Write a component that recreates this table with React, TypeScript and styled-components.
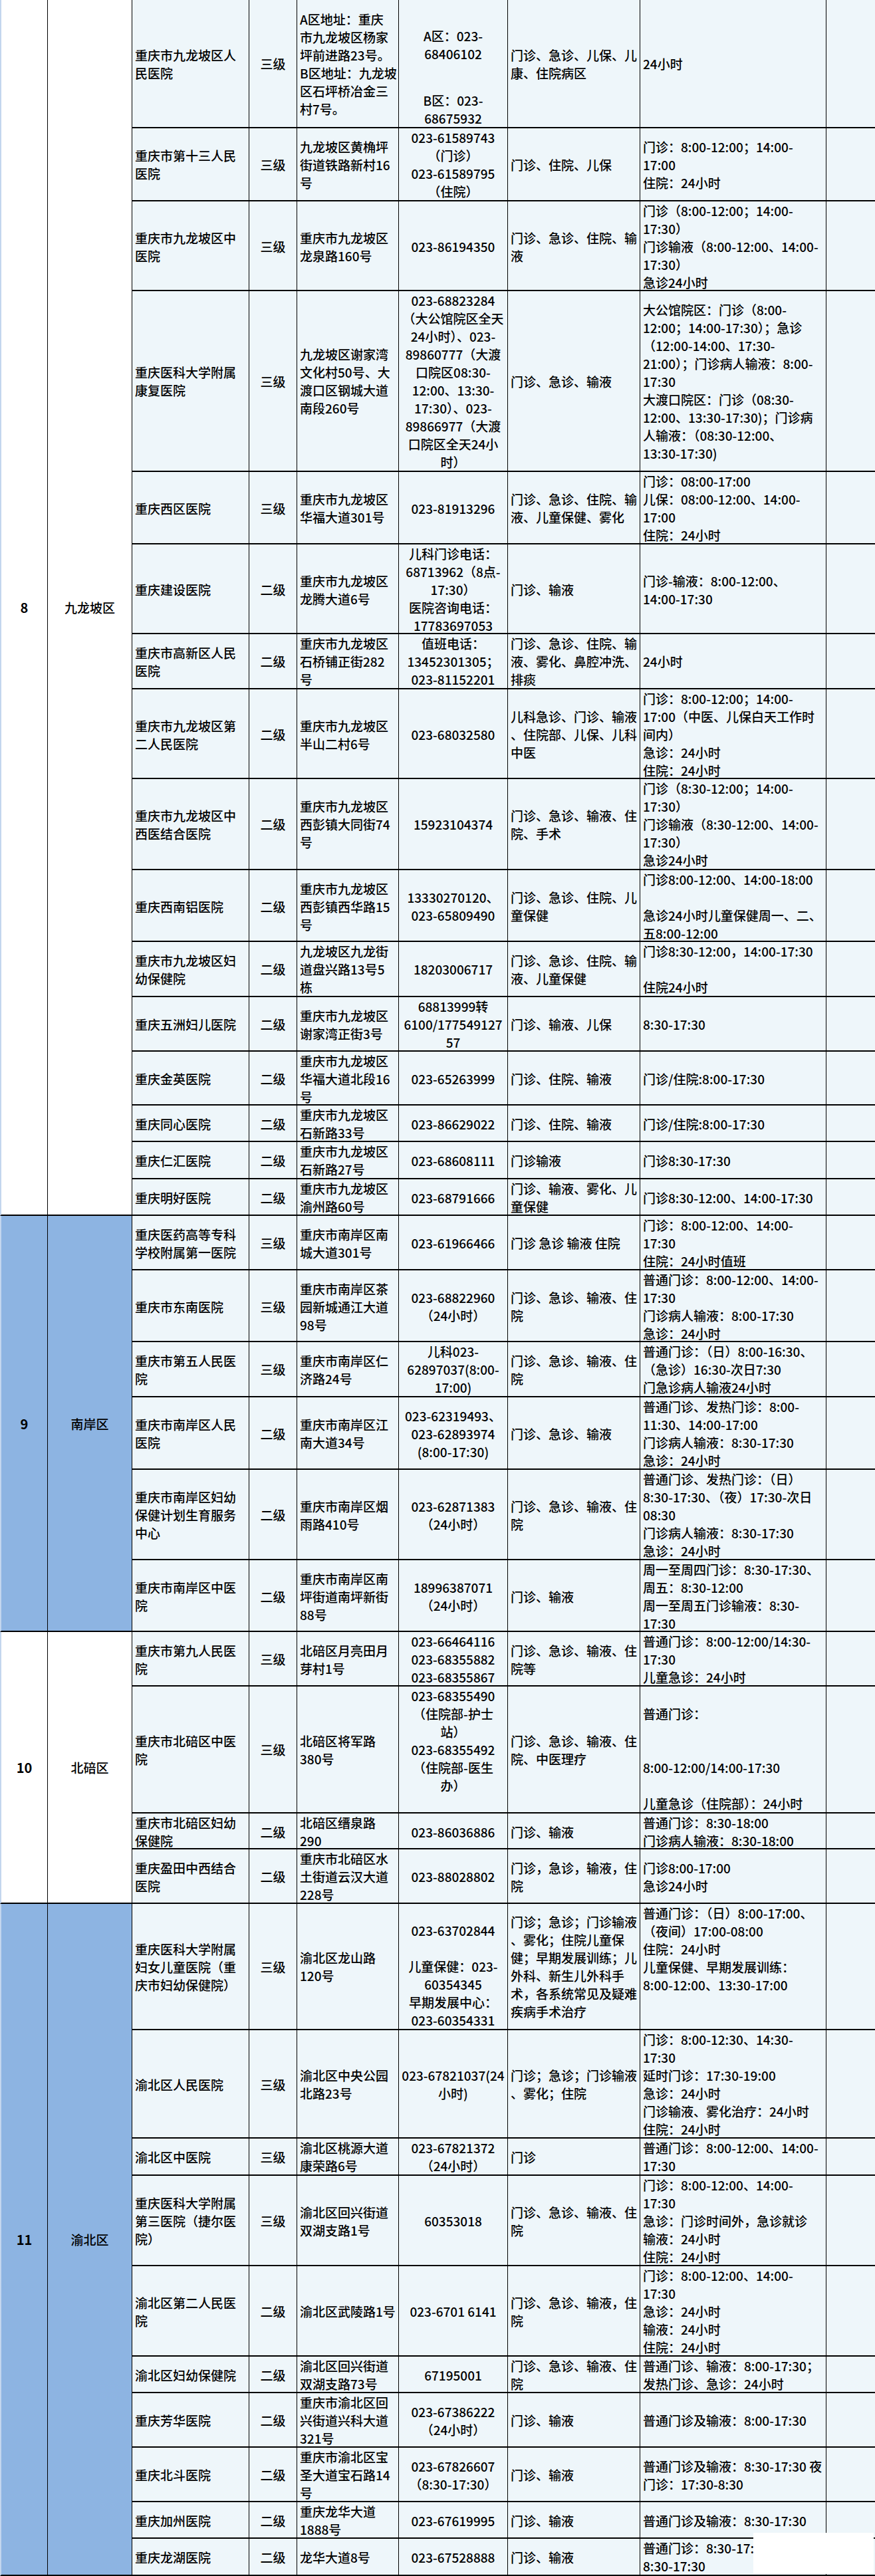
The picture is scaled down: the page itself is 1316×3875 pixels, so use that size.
import React from "react";
import styled, { createGlobalStyle } from "styled-components";

const GlobalStyle = createGlobalStyle`
  body {
    margin: 0;
    background: #ffffff;
    font-family: "Noto Sans CJK SC", "Noto Sans", sans-serif;
    color: #000000;
  }
`;

const Sheet = styled.div`
  position: relative;
  width: 1316px;
  font-size: 19px;
  font-weight: 500;
`;

const District = styled.div`
  display: flex;
  width: 100%;
`;

const GroupCell = styled.div<{ $fill: boolean; $w: number; $bold?: boolean }>`
  flex: none;
  width: ${({ $w }) => $w}px;
  box-sizing: border-box;
  display: flex;
  align-items: center;
  justify-content: center;
  background: ${({ $fill }) => ($fill ? "#8db4e2" : "#ffffff")};
  border-right: 1px solid #000;
  border-bottom: 2px solid #000;
  font-weight: ${({ $bold }) => ($bold ? 700 : 500)};
  font-size: ${({ $bold }) => ($bold ? "20px" : "19px")};
`;

const NumCell = styled(GroupCell)`
  border-left: 2px solid #c3d6ee;
`;

const Rows = styled.div`
  flex: 1;
  display: flex;
  flex-direction: column;
`;

const Row = styled.div<{ $h: number }>`
  display: grid;
  grid-template-columns: 176px 72px 153px 164px 199px 280px 1fr;
  height: ${({ $h }) => $h}px;
  box-sizing: border-box;
  border-bottom: 2px solid #000;
  background: #eef6fa;
`;

const Cell = styled.div<{ $center?: boolean; $v?: "top" | "bottom" }>`
  display: flex;
  flex-direction: column;
  justify-content: ${({ $v }) => ($v === "top" ? "flex-start" : $v === "bottom" ? "flex-end" : "center")};
  align-items: ${({ $center }) => ($center ? "center" : "flex-start")};
  padding: 0 4px;
  border-right: 1px solid #000;
  overflow: visible;
  min-width: 0;
`;

const EmptyCell = styled.div``;

const Line = styled.div`
  height: 27px;
  line-height: 27px;
  white-space: pre;
`;

const Gap = styled.div`
  height: 43px;
`;

const Patch = styled.div`
  position: absolute;
  left: 1133px;
  top: 3810px;
  width: 181px;
  height: 62px;
  background: #ffffff;
`;

type Hospital = {
  h: number;
  name: string;
  level: string;
  addr: string;
  phone: string;
  svc: string;
  hours: string;
  phoneV?: "top" | "bottom";
  hoursV?: "top" | "bottom";
};

type Area = { no: string; name: string; fill: boolean; rows: Hospital[] };

const areas: Area[] = [
  {
    no: "8",
    name: "九龙坡区",
    fill: false,
    rows: [
      {
        h: 193,
        name: "重庆市九龙坡区人\n民医院",
        level: "三级",
        addr: "A区地址：重庆\n市九龙坡区杨家\n坪前进路23号。\nB区地址：九龙坡\n区石坪桥冶金三\n村7号。",
        phone: "A区：023-\n68406102\n_\nB区：023-\n68675932",
        phoneV: "bottom",
        svc: "门诊、急诊、儿保、儿\n康、住院病区",
        hours: "24小时",
      },
      {
        h: 110,
        name: "重庆市第十三人民\n医院",
        level: "三级",
        addr: "九龙坡区黄桷坪\n街道铁路新村16\n号",
        phone: "023-61589743\n（门诊）\n023-61589795\n（住院）",
        svc: "门诊、住院、儿保",
        hours: "门诊：8:00-12:00；14:00-\n17:00\n住院：24小时",
      },
      {
        h: 135,
        name: "重庆市九龙坡区中\n医院",
        level: "三级",
        addr: "重庆市九龙坡区\n龙泉路160号",
        phone: "023-86194350",
        svc: "门诊、急诊、住院、输\n液",
        hours: "门诊（8:00-12:00；14:00-\n17:30）\n门诊输液（8:00-12:00、14:00-\n17:30）\n急诊24小时",
      },
      {
        h: 272,
        name: "重庆医科大学附属\n康复医院",
        level: "三级",
        addr: "九龙坡区谢家湾\n文化村50号、大\n渡口区钢城大道\n南段260号",
        phone: "023-68823284\n（大公馆院区全天\n24小时）、023-\n89860777（大渡\n口院区08:30-\n12:00、13:30-\n17:30）、023-\n89866977（大渡\n口院区全天24小\n时）",
        svc: "门诊、急诊、输液",
        hours: "大公馆院区：门诊（8:00-\n12:00；14:00-17:30）；急诊\n（12:00-14:00、17:30-\n21:00）；门诊病人输液：8:00-\n17:30\n大渡口院区：门诊（08:30-\n12:00、13:30-17:30)；门诊病\n人输液：（08:30-12:00、\n13:30-17:30)",
      },
      {
        h: 109,
        name: "重庆西区医院",
        level: "三级",
        addr: "重庆市九龙坡区\n华福大道301号",
        phone: "023-81913296",
        svc: "门诊、急诊、住院、输\n液、儿童保健、雾化",
        hours: "门诊：08:00-17:00\n儿保：08:00-12:00、14:00-\n17:00\n住院：24小时",
      },
      {
        h: 135,
        name: "重庆建设医院",
        level: "二级",
        addr: "重庆市九龙坡区\n龙腾大道6号",
        phone: "儿科门诊电话：\n68713962（8点-\n17:30）\n医院咨询电话：\n17783697053",
        svc: "门诊、输液",
        hours: "门诊-输液：8:00-12:00、\n14:00-17:30",
      },
      {
        h: 83,
        name: "重庆市高新区人民\n医院",
        level: "二级",
        addr: "重庆市九龙坡区\n石桥铺正街282\n号",
        phone: "值班电话：\n13452301305；\n023-81152201",
        svc: "门诊、急诊、住院、输\n液、雾化、鼻腔冲洗、\n排痰",
        hours: "24小时",
      },
      {
        h: 135,
        name: "重庆市九龙坡区第\n二人民医院",
        level: "二级",
        addr: "重庆市九龙坡区\n半山二村6号",
        phone: "023-68032580",
        svc: "儿科急诊、门诊、输液\n、住院部、儿保、儿科\n中医",
        hours: "门诊：8:00-12:00；14:00-\n17:00（中医、儿保白天工作时\n间内）\n急诊：24小时\n住院：24小时",
      },
      {
        h: 137,
        name: "重庆市九龙坡区中\n西医结合医院",
        level: "二级",
        addr: "重庆市九龙坡区\n西彭镇大同街74\n号",
        phone: "15923104374",
        svc: "门诊、急诊、输液、住\n院、手术",
        hours: "门诊（8:30-12:00；14:00-\n17:30）\n门诊输液（8:30-12:00、14:00-\n17:30）\n急诊24小时",
      },
      {
        h: 108,
        name: "重庆西南铝医院",
        level: "二级",
        addr: "重庆市九龙坡区\n西彭镇西华路15\n号",
        phone: "13330270120、\n023-65809490",
        svc: "门诊、急诊、住院、儿\n童保健",
        hours: "门诊8:00-12:00、14:00-18:00\n\n急诊24小时儿童保健周一、二、\n五8:00-12:00",
      },
      {
        h: 83,
        name: "重庆市九龙坡区妇\n幼保健院",
        level: "二级",
        addr: "九龙坡区九龙街\n道盘兴路13号5\n栋",
        phone: "18203006717",
        svc: "门诊、急诊、住院、输\n液、儿童保健",
        hours: "门诊8:30-12:00，14:00-17:30\n\n住院24小时",
      },
      {
        h: 82,
        name: "重庆五洲妇儿医院",
        level: "二级",
        addr: "重庆市九龙坡区\n谢家湾正街3号",
        phone: "68813999转\n6100/177549127\n57",
        svc: "门诊、输液、儿保",
        hours: "8:30-17:30",
      },
      {
        h: 81,
        name: "重庆金英医院",
        level: "二级",
        addr: "重庆市九龙坡区\n华福大道北段16\n号",
        phone: "023-65263999",
        svc: "门诊、住院、输液",
        hours: "门诊/住院:8:00-17:30",
      },
      {
        h: 55,
        name: "重庆同心医院",
        level: "二级",
        addr: "重庆市九龙坡区\n石新路33号",
        phone: "023-86629022",
        svc: "门诊、住院、输液",
        hours: "门诊/住院:8:00-17:30",
      },
      {
        h: 56,
        name: "重庆仁汇医院",
        level: "二级",
        addr: "重庆市九龙坡区\n石新路27号",
        phone: "023-68608111",
        svc: "门诊输液",
        hours: "门诊8:30-17:30",
      },
      {
        h: 55,
        name: "重庆明好医院",
        level: "二级",
        addr: "重庆市九龙坡区\n渝州路60号",
        phone: "023-68791666",
        svc: "门诊、输液、雾化、儿\n童保健",
        hours: "门诊8:30-12:00、14:00-17:30",
      },
    ],
  },
  {
    no: "9",
    name: "南岸区",
    fill: true,
    rows: [
      {
        h: 82,
        name: "重庆医药高等专科\n学校附属第一医院",
        level: "三级",
        addr: "重庆市南岸区南\n城大道301号",
        phone: "023-61966466",
        svc: "门诊 急诊 输液 住院",
        hours: "门诊：8:00-12:00、14:00-\n17:30\n住院：24小时值班",
      },
      {
        h: 108,
        name: "重庆市东南医院",
        level: "三级",
        addr: "重庆市南岸区茶\n园新城通江大道\n98号",
        phone: "023-68822960\n（24小时）",
        svc: "门诊、急诊、输液、住\n院",
        hours: "普通门诊：8:00-12:00、14:00-\n17:30\n门诊病人输液：8:00-17:30\n急诊：24小时",
      },
      {
        h: 83,
        name: "重庆市第五人民医\n院",
        level: "三级",
        addr: "重庆市南岸区仁\n济路24号",
        phone: "儿科023-\n62897037(8:00-\n17:00)",
        svc: "门诊、急诊、输液、住\n院",
        hours: "普通门诊：（日）8:00-16:30、\n（急诊）16:30-次日7:30\n门急诊病人输液24小时",
      },
      {
        h: 109,
        name: "重庆市南岸区人民\n医院",
        level: "二级",
        addr: "重庆市南岸区江\n南大道34号",
        phone: "023-62319493、\n023-62893974\n(8:00-17:30)",
        svc: "门诊、急诊、输液",
        hours: "普通门诊、发热门诊：8:00-\n11:30、14:00-17:00\n门诊病人输液：8:30-17:30\n急诊：24小时",
      },
      {
        h: 136,
        name: "重庆市南岸区妇幼\n保健计划生育服务\n中心",
        level: "二级",
        addr: "重庆市南岸区烟\n雨路410号",
        phone: "023-62871383\n（24小时）",
        svc: "门诊、急诊、输液、住\n院",
        hours: "普通门诊、发热门诊：（日）\n8:30-17:30、（夜）17:30-次日\n08:30\n门诊病人输液：8:30-17:30\n急诊：24小时",
      },
      {
        h: 108,
        name: "重庆市南岸区中医\n院",
        level: "二级",
        addr: "重庆市南岸区南\n坪街道南坪新街\n88号",
        phone: "18996387071\n（24小时）",
        svc: "门诊、输液",
        hours: "周一至周四门诊：8:30-17:30、\n周五：8:30-12:00\n周一至周五门诊输液：8:30-\n17:30",
      },
    ],
  },
  {
    no: "10",
    name: "北碚区",
    fill: false,
    rows: [
      {
        h: 82,
        name: "重庆市第九人民医\n院",
        level: "三级",
        addr: "北碚区月亮田月\n芽村1号",
        phone: "023-66464116\n023-68355882\n023-68355867",
        svc: "门诊、急诊、输液、住\n院等",
        hours: "普通门诊：8:00-12:00/14:30-\n17:30\n儿童急诊：24小时",
      },
      {
        h: 191,
        name: "重庆市北碚区中医\n院",
        level: "三级",
        addr: "北碚区将军路\n380号",
        phone: "023-68355490\n（住院部-护士\n站）\n023-68355492\n（住院部-医生\n办）",
        phoneV: "top",
        svc: "门诊、急诊、输液、住\n院、中医理疗",
        hours: "\n普通门诊：\n\n\n8:00-12:00/14:00-17:30\n\n儿童急诊（住院部）：24小时",
      },
      {
        h: 54,
        name: "重庆市北碚区妇幼\n保健院",
        level: "二级",
        addr: "北碚区缙泉路\n290",
        phone: "023-86036886",
        svc: "门诊、输液",
        hours: "普通门诊：8:30-18:00\n门诊病人输液：8:30-18:00",
      },
      {
        h: 82,
        name: "重庆盈田中西结合\n医院",
        level: "二级",
        addr: "重庆市北碚区水\n土街道云汉大道\n228号",
        phone: "023-88028802",
        svc: "门诊，急诊，输液，住\n院",
        hours: "门诊8:00-17:00\n急诊24小时",
      },
    ],
  },
  {
    no: "11",
    name: "渝北区",
    fill: true,
    rows: [
      {
        h: 190,
        name: "重庆医科大学附属\n妇女儿童医院（重\n庆市妇幼保健院）",
        level: "三级",
        addr: "渝北区龙山路\n120号",
        phone: "023-63702844\n\n儿童保健：023-\n60354345\n早期发展中心：\n023-60354331",
        phoneV: "bottom",
        svc: "门诊；急诊；门诊输液\n、雾化；住院儿童保\n健；早期发展训练；儿\n外科、新生儿外科手\n术，各系统常见及疑难\n疾病手术治疗",
        hours: "普通门诊：（日）8:00-17:00、\n（夜间）17:00-08:00\n住院：24小时\n儿童保健、早期发展训练：\n8:00-12:00、13:30-17:00",
        hoursV: "top",
      },
      {
        h: 163,
        name: "渝北区人民医院",
        level: "三级",
        addr: "渝北区中央公园\n北路23号",
        phone: "023-67821037(24\n小时)",
        svc: "门诊；急诊；门诊输液\n、雾化；住院",
        hours: "门诊：8:00-12:30、14:30-\n17:30\n延时门诊：17:30-19:00\n急诊：24小时\n门诊输液、雾化治疗：24小时\n住院：24小时",
      },
      {
        h: 56,
        name: "渝北区中医院",
        level: "三级",
        addr: "渝北区桃源大道\n康荣路6号",
        phone: "023-67821372\n（24小时）",
        svc: "门诊",
        hours: "普通门诊：8:00-12:00、14:00-\n17:30",
      },
      {
        h: 136,
        name: "重庆医科大学附属\n第三医院（捷尔医\n院）",
        level: "三级",
        addr: "渝北区回兴街道\n双湖支路1号",
        phone: "60353018",
        svc: "门诊、急诊、输液、住\n院",
        hours: "门诊：8:00-12:00、14:00-\n17:30\n急诊：门诊时间外，急诊就诊\n输液：24小时\n住院：24小时",
      },
      {
        h: 136,
        name: "渝北区第二人民医\n院",
        level: "二级",
        addr: "渝北区武陵路1号",
        phone: "023-6701 6141",
        svc: "门诊、急诊、输液，住\n院",
        hours: "门诊：8:00-12:00、14:00-\n17:30\n急诊：24小时\n输液：24小时\n住院：24小时",
      },
      {
        h: 55,
        name: "渝北区妇幼保健院",
        level: "二级",
        addr: "渝北区回兴街道\n双湖支路73号",
        phone: "67195001",
        svc: "门诊、急诊、输液、住\n院",
        hours: "普通门诊、输液：8:00-17:30；\n发热门诊、急诊：24小时",
      },
      {
        h: 82,
        name: "重庆芳华医院",
        level: "二级",
        addr: "重庆市渝北区回\n兴街道兴科大道\n321号",
        phone: "023-67386222\n（24小时）",
        svc: "门诊、输液",
        hours: "普通门诊及输液：8:00-17:30",
      },
      {
        h: 82,
        name: "重庆北斗医院",
        level: "二级",
        addr: "重庆市渝北区宝\n圣大道宝石路14\n号",
        phone: "023-67826607\n（8:30-17:30）",
        svc: "门诊、输液",
        hours: "普通门诊及输液：8:30-17:30 夜\n门诊：17:30-8:30",
      },
      {
        h: 55,
        name: "重庆加州医院",
        level: "二级",
        addr: "重庆龙华大道\n1888号",
        phone: "023-67619995",
        svc: "门诊、输液",
        hours: "普通门诊及输液：8:30-17:30",
      },
      {
        h: 56,
        name: "重庆龙湖医院",
        level: "二级",
        addr: "龙华大道8号",
        phone: "023-67528888",
        svc: "门诊、输液",
        hours: "普通门诊：8:30-17:30；急诊：\n8:30-17:30",
      },
    ],
  },
];

function Lines({ text }: { text: string }) {
  return (
    <>
      {text.split("\n").map((t, i) => (t === "_" ? <Gap key={i} /> : <Line key={i}>{t}</Line>))}
    </>
  );
}

function HospitalRow({ r }: { r: Hospital }) {
  return (
    <Row $h={r.h}>
      <Cell>
        <Lines text={r.name} />
      </Cell>
      <Cell $center>
        <Lines text={r.level} />
      </Cell>
      <Cell>
        <Lines text={r.addr} />
      </Cell>
      <Cell $center $v={r.phoneV}>
        <Lines text={r.phone} />
      </Cell>
      <Cell>
        <Lines text={r.svc} />
      </Cell>
      <Cell $v={r.hoursV}>
        <Lines text={r.hours} />
      </Cell>
      <EmptyCell />
    </Row>
  );
}

export default function App() {
  return (
    <>
      <GlobalStyle />
      <Sheet>
        {areas.map((a) => (
          <District key={a.no}>
            <NumCell $w={72} $fill={a.fill} $bold>
              {a.no}
            </NumCell>
            <GroupCell $w={127} $fill={a.fill}>
              {a.name}
            </GroupCell>
            <Rows>
              {a.rows.map((r) => (
                <HospitalRow key={r.name} r={r} />
              ))}
            </Rows>
          </District>
        ))}
        <Patch />
      </Sheet>
    </>
  );
}
